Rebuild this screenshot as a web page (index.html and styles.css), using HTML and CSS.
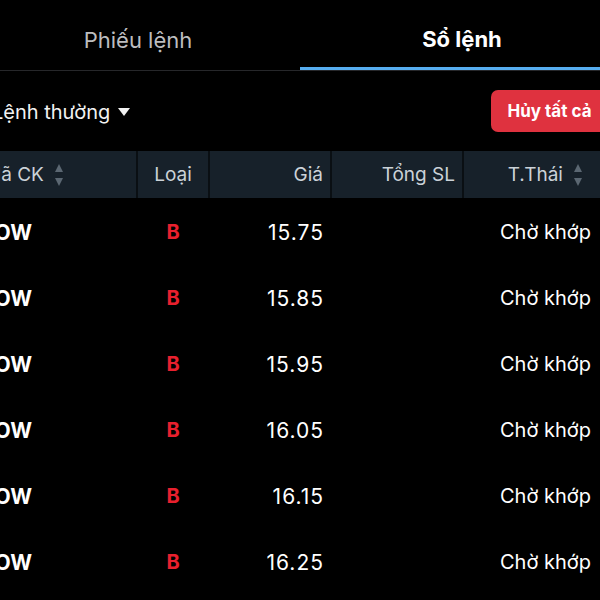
FILE: index.html
```html
<!DOCTYPE html>
<html lang="vi">
<head>
<meta charset="UTF-8" />
<meta name="viewport" content="width=device-width, initial-scale=1" />
<title>Sổ lệnh</title>
<link rel="stylesheet" href="styles.css">
</head>
<body>
<div class="app">
  <div class="tabs">
    <div class="tab">Phiếu lệnh</div>
    <div class="tab active">Sổ lệnh</div>
  </div>

  <div class="toolbar">
    <div class="order-type">Lệnh thường <span class="caret"></span></div>
    <button class="cancel-all">Hủy tất cả</button>
  </div>

  <table class="orders">
    <thead>
      <tr>
        <th class="col-sym">Mã CK <span class="sort"></span></th>
        <th class="col-type">Loại</th>
        <th class="col-price">Giá</th>
        <th class="col-qty">Tổng SL</th>
        <th class="col-status">T.Thái <span class="sort"></span></th>
      </tr>
    </thead>
    <tbody>
      <tr><td class="col-sym">COW</td><td class="col-type buy">B</td><td class="col-price">15.75</td><td class="col-qty"></td><td class="col-status">Chờ khớp</td></tr>
      <tr><td class="col-sym">COW</td><td class="col-type buy">B</td><td class="col-price">15.85</td><td class="col-qty"></td><td class="col-status">Chờ khớp</td></tr>
      <tr><td class="col-sym">COW</td><td class="col-type buy">B</td><td class="col-price">15.95</td><td class="col-qty"></td><td class="col-status">Chờ khớp</td></tr>
      <tr><td class="col-sym">COW</td><td class="col-type buy">B</td><td class="col-price">16.05</td><td class="col-qty"></td><td class="col-status">Chờ khớp</td></tr>
      <tr><td class="col-sym">COW</td><td class="col-type buy">B</td><td class="col-price">16.15</td><td class="col-qty"></td><td class="col-status">Chờ khớp</td></tr>
      <tr><td class="col-sym">COW</td><td class="col-type buy">B</td><td class="col-price">16.25</td><td class="col-qty"></td><td class="col-status">Chờ khớp</td></tr>
    </tbody>
  </table>
</div>
</body>
</html>
```

FILE: styles.css
```css
* {
  margin: 0;
  padding: 0;
  box-sizing: border-box;
}

body {
  background: #000;
  color: #fff;
  font-family: Inter, 'Noto Sans', sans-serif;
  overflow: hidden;
  width: 600px;
  height: 600px;
}

/* the phone screen is a bit wider than the shot, cropped on both sides */
.app {
  width: 648px;
  margin-left: -24px;
}

.tabs {
  display: flex;
  margin-top: 12px;
  border-bottom: 1px solid #26272a;
}

.tab {
  flex: 1;
  height: 58px;
  display: flex;
  align-items: center;
  justify-content: center;
  font-size: 22px;
  color: #bdbdbf;
  padding-bottom: 2px;
}

.tab.active {
  color: #fff;
  font-weight: 700;
  font-size: 22px;
  border-bottom: 3px solid #57aef0;
  margin-bottom: -2px;
}

.toolbar {
  display: flex;
  justify-content: space-between;
  align-items: center;
  padding: 19px 16px 19px 16px;
}

.order-type {
  display: flex;
  align-items: center;
  gap: 8px;
  font-size: 20px;
  color: #f2f2f2;
  padding-top: 2px;
}

.caret {
  width: 0;
  height: 0;
  border-left: 6px solid transparent;
  border-right: 6px solid transparent;
  border-top: 8px solid #f2f2f2;
}

.cancel-all {
  height: 42px;
  width: 117px;
  border: none;
  border-radius: 7px;
  background: #df323f;
  color: #fff;
  font-family: inherit;
  font-size: 17px;
  font-weight: 700;
}

.orders {
  width: 648px;
  border-collapse: collapse;
  table-layout: fixed;
}

.orders th {
  height: 47px;
  background: #17212a;
  color: #cbd2d8;
  font-weight: 400;
  font-size: 19px;
  border-left: 2px solid #0a0f13;
  padding: 0 7px;
  white-space: nowrap;
}

.orders th:first-child {
  border-left: none;
}

.orders td {
  height: 66px;
  font-size: 20px;
  padding: 2px 8px 0;
  white-space: nowrap;
}

.col-sym { width: 161px; text-align: left; }
.col-type { width: 72px; text-align: center; }
.col-price { width: 122px; text-align: right; }
.col-qty { width: 132px; text-align: right; }
.col-status { width: 161px; text-align: center; }

.orders th.col-sym {
  padding-left: 8px;
}

td.col-sym {
  font-weight: 700;
  font-size: 21px;
  padding-left: 3px;
}

td.col-price {
  font-size: 21px;
  letter-spacing: 1px;
  padding-right: 7px;
}

td.buy {
  color: #e8202e;
  font-weight: 700;
}

td.col-status {
  padding-left: 12px;
}

.orders th.col-status {
  padding-left: 10px;
}

.sort {
  display: inline-block;
  position: relative;
  width: 9px;
  height: 22px;
  vertical-align: middle;
  margin-left: 6px;
}

.sort::before,
.sort::after {
  content: '';
  position: absolute;
  left: 0;
  border-left: 4.5px solid transparent;
  border-right: 4.5px solid transparent;
}

.sort::before {
  top: 0;
  border-bottom: 8px solid #5b6772;
}

.sort::after {
  bottom: 0;
  border-top: 8px solid #5b6772;
}
```
